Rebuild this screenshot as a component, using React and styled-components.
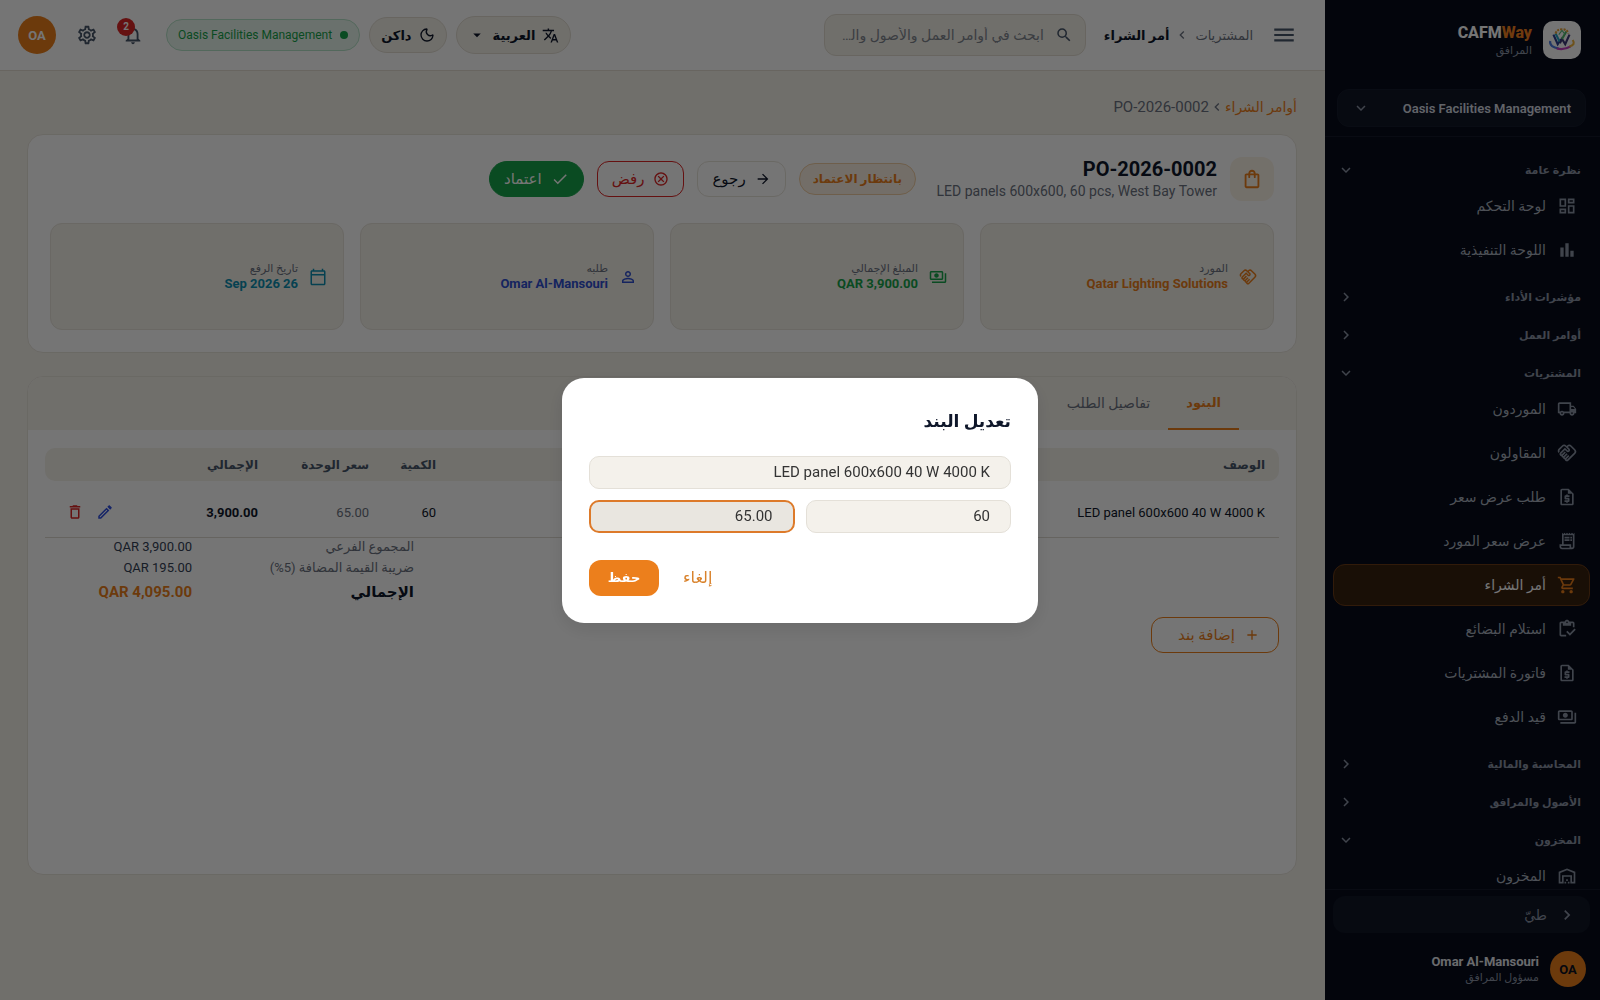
import React from 'react';
import styled, { createGlobalStyle } from 'styled-components';
import { Moon } from 'lucide-react';
import {
    MdOutlineDashboard, MdBarChart, MdOutlineLocalShipping, MdOutlineHandshake,
    MdOutlineRequestQuote, MdOutlineReceiptLong, MdOutlineShoppingCart, MdOutlineInventory,
    MdOutlinePayments, MdOutlineWarehouse, MdExpandMore, MdChevronRight, MdChevronLeft,
    MdMenu, MdSearch, MdTranslate, MdArrowDropDown, MdOutlineNotifications,
    MdOutlineSettings, MdOutlineShoppingBag, MdArrowForward, MdOutlineCancel, MdCheck,
    MdPersonOutline, MdOutlineCalendarToday, MdOutlineEdit, MdDeleteOutline, MdAdd,
} from 'react-icons/md';

const menu = [
    {
        title: 'نظرة عامة', open: true, items: [
            { label: 'لوحة التحكم', icon: MdOutlineDashboard },
            { label: 'اللوحة التنفيذية', icon: MdBarChart },
        ],
    },
    { title: 'مؤشرات الأداء', items: [] },
    { title: 'أوامر العمل', items: [] },
    {
        title: 'المشتريات', open: true, items: [
            { label: 'الموردون', icon: MdOutlineLocalShipping },
            { label: 'المقاولون', icon: MdOutlineHandshake },
            { label: 'طلب عرض سعر', icon: MdOutlineRequestQuote },
            { label: 'عرض سعر المورد', icon: MdOutlineReceiptLong },
            { label: 'أمر الشراء', icon: MdOutlineShoppingCart, active: true },
            { label: 'استلام البضائع', icon: MdOutlineInventory },
            { label: 'فاتورة المشتريات', icon: MdOutlineRequestQuote },
            { label: 'قيد الدفع', icon: MdOutlinePayments },
        ],
    },
    { title: 'المحاسبة والمالية', items: [] },
    { title: 'الأصول والمرافق', items: [] },
    {
        title: 'المخزون', open: true, items: [
            { label: 'المخزون', icon: MdOutlineWarehouse },
        ],
    },
];

const facts = [
    { label: 'المورد', value: 'Qatar Lighting Solutions', icon: MdOutlineHandshake, color: '#eb7f1b' },
    { label: 'المبلغ الإجمالي', value: 'QAR 3,900.00', icon: MdOutlinePayments, color: '#16a34a' },
    { label: 'طلبه', value: 'Omar Al-Mansouri', icon: MdPersonOutline, color: '#2f4fd0' },
    { label: 'تاريخ الرفع', value: '26 Sep 2026', icon: MdOutlineCalendarToday, color: '#0e8fb0' },
];

const LogoMark = () => (
    <svg viewBox="0 0 28 28" width="30" height="30" fill="none" aria-hidden="true">
        <path d="M6 9l4 9 3-5" stroke="#2b3f94" strokeWidth="2" />
        <path d="M8 8l4 8" stroke="#29a3c4" strokeWidth="2" />
        <path d="M12 17l2-4 3 5 4-9" stroke="#3d3a78" strokeWidth="2" />
        <path d="M14 13l4-7" stroke="#4cb56a" strokeWidth="2" />
        <path d="M8 8c1-3 3-4 6-4s5 1 6 4" stroke="#e8a33a" strokeWidth="2" strokeDasharray="2 1" />
        <path d="M11 9l3-4 3 4" stroke="#58b87a" strokeWidth="1" />
        <path d="M3 15c-1 4 3 6 8 7" stroke="#4a7be0" strokeWidth="2" />
        <path d="M9 22c5 1 10 0 13-2" stroke="#c43fc0" strokeWidth="2" />
        <path d="M21 20c4-1 5-3 3-6" stroke="#efb23c" strokeWidth="2" />
    </svg>
);

const Sidebar = () => (
    <Aside>
        <Brand>
            <LogoBox><LogoMark /></LogoBox>
            <div>
                <BrandName>CAFM<span>Way</span></BrandName>
                <Small>المرافق</Small>
            </div>
        </Brand>
        <OrgWrap>
            <OrgButton type="button">
                Oasis Facilities Management
                <MdExpandMore size={18} />
            </OrgButton>
        </OrgWrap>
        <Menu>
            {menu.map((group) => (
                <Group key={group.title} $open={group.open}>
                    <GroupButton type="button" aria-expanded={!!group.open}>
                        {group.title}
                        {group.open ? <MdExpandMore size={18} /> : <MdChevronRight size={18} />}
                    </GroupButton>
                    {group.items.map(({ label, icon: Icon, active }) => (
                        <MenuLink key={label} href="#" $active={active}>
                            <Icon size={20} />
                            {label}
                        </MenuLink>
                    ))}
                </Group>
            ))}
        </Menu>
        <SideFooter>
            <Collapse type="button"><MdChevronRight size={20} />طيّ</Collapse>
            <User>
                <Avatar $dark>OA</Avatar>
                <div>
                    <UserName>Omar Al-Mansouri</UserName>
                    <Small>مسؤول المرافق</Small>
                </div>
            </User>
        </SideFooter>
    </Aside>
);

const Header = () => (
    <TopBar>
        <IconButton type="button" aria-label="القائمة"><MdMenu size={26} /></IconButton>
        <TopCrumbs>
            <span>المشتريات</span>
            <MdChevronLeft size={16} />
            <strong>أمر الشراء</strong>
        </TopCrumbs>
        <Search>
            <MdSearch size={18} />
            <SearchInput aria-label="بحث" placeholder="ابحث في أوامر العمل والأصول والطلبات" />
        </Search>
        <Tools>
            <Pill type="button">
                <MdTranslate size={17} />
                العربية
                <MdArrowDropDown size={18} />
            </Pill>
            <Pill type="button" $small><Moon size={16} />داكن</Pill>
            <Tenant><Dot />Oasis Facilities Management</Tenant>
            <IconButton type="button" aria-label="الإشعارات">
                <MdOutlineNotifications size={22} />
                <Badge>2</Badge>
            </IconButton>
            <IconButton type="button" aria-label="الإعدادات"><MdOutlineSettings size={22} /></IconButton>
            <Avatar>OA</Avatar>
        </Tools>
    </TopBar>
);

const Summary = () => (
    <Card>
        <SummaryHead>
            <BagBox><MdOutlineShoppingBag size={22} /></BagBox>
            <OrderInfo>
                <OrderTitle>PO-2026-0002</OrderTitle>
                <OrderText>LED panels 600x600, 60 pcs, West Bay Tower</OrderText>
            </OrderInfo>
            <Status>بانتظار الاعتماد</Status>
            <Actions>
                <Button type="button"><MdArrowForward size={16} />رجوع</Button>
                <Button type="button" $tone="danger"><MdOutlineCancel size={16} />رفض</Button>
                <Button type="button" $tone="success"><MdCheck size={18} />اعتماد</Button>
            </Actions>
        </SummaryHead>
        <Facts>
            {facts.map(({ label, value, icon: Icon, color }) => (
                <Fact key={label} $color={color}>
                    <Icon size={18} />
                    <div>
                        <FactLabel>{label}</FactLabel>
                        <FactValue>{value}</FactValue>
                    </div>
                </Fact>
            ))}
        </Facts>
    </Card>
);

const Items = () => (
    <ItemsCard>
        <Tabs role="tablist">
            <Tab type="button" role="tab" aria-selected="true" $active>البنود</Tab>
            <Tab type="button" role="tab" aria-selected="false">تفاصيل الطلب</Tab>
        </Tabs>
        <ItemsBody>
            <Table>
                <colgroup>
                    <col />
                    <Col $w={67} />
                    <Col $w={111} />
                    <Col $w={138} />
                    <Col $w={89} />
                </colgroup>
                <thead>
                    <tr>
                        <Th>الوصف</Th>
                        <Th>الكمية</Th>
                        <Th>سعر الوحدة</Th>
                        <Th>الإجمالي</Th>
                        <Th />
                    </tr>
                </thead>
                <tbody>
                    <tr>
                        <Td>LED panel 600x600 40 W 4000 K</Td>
                        <Td>60</Td>
                        <Td $muted>65.00</Td>
                        <Td $strong>3,900.00</Td>
                        <Td>
                            <RowActions>
                                <RowButton type="button" aria-label="تعديل" $color="#2f4fe0"><MdOutlineEdit size={18} /></RowButton>
                                <RowButton type="button" aria-label="حذف" $color="#dc2626"><MdDeleteOutline size={18} /></RowButton>
                            </RowActions>
                        </Td>
                    </tr>
                </tbody>
            </Table>
            <Totals>
                <dt>المجموع الفرعي</dt>
                <dd>QAR 3,900.00</dd>
                <dt>ضريبة القيمة المضافة (5%)</dt>
                <dd>QAR 195.00</dd>
                <GrandLabel>الإجمالي</GrandLabel>
                <GrandValue>QAR 4,095.00</GrandValue>
            </Totals>
            <AddButton type="button"><MdAdd size={16} />إضافة بند</AddButton>
        </ItemsBody>
    </ItemsCard>
);

const EditDialog = () => (
    <Overlay>
        <Dialog role="dialog" aria-modal="true" aria-labelledby="edit-title">
            <DialogTitle id="edit-title">تعديل البند</DialogTitle>
            <Field aria-label="الوصف" defaultValue="LED panel 600x600 40 W 4000 K" />
            <FieldRow>
                <Field aria-label="الكمية" defaultValue="60" />
                <Field aria-label="سعر الوحدة" defaultValue="65.00" $focused />
            </FieldRow>
            <DialogActions>
                <CancelButton type="button">إلغاء</CancelButton>
                <SaveButton type="button">حفظ</SaveButton>
            </DialogActions>
        </Dialog>
    </Overlay>
);

const App = () => (
    <>
        <GlobalStyle />
        <Page dir="rtl">
            <Sidebar />
            <Main>
                <Header />
                <Content>
                    <Crumbs>
                        <a href="#">أوامر الشراء</a>
                        <MdChevronLeft size={16} />
                        <span>PO-2026-0002</span>
                    </Crumbs>
                    <Summary />
                    <Items />
                </Content>
            </Main>
            <EditDialog />
        </Page>
    </>
);

const GlobalStyle = createGlobalStyle`
* { box-sizing: border-box; }

body {
    margin: 0;
    overflow: hidden;
}

body, button, input {
    font-family: Roboto, "DejaVu Sans", sans-serif;
}

button {
    border: 0;
    padding: 0;
    background: none;
    color: inherit;
}

svg { flex-shrink: 0; }
`

const Page = styled.div`
display: flex;
height: 100vh;
background: #f4f1ea;
color: #0f172a;
`

const Aside = styled.aside`
display: flex;
flex-direction: column;
width: 275px;
flex-shrink: 0;
background: #070c1b;
color: #a3abb8;
`

const Brand = styled.div`
display: flex;
align-items: center;
gap: 11px;
height: 80px;
padding: 0 19px;
`

const LogoBox = styled.div`
display: flex;
align-items: center;
justify-content: center;
width: 38px;
height: 38px;
border-radius: 10px;
background: #ffffff;
`

const BrandName = styled.div`
font-size: 16px;
line-height: 20px;
font-weight: 800;
color: #ffffff;
direction: ltr;

span { color: #f58220; }
`

const Small = styled.div`
font-size: 11px;
line-height: 15px;
color: #8c95a6;
`

const OrgWrap = styled.div`
padding: 9px 14px 9px 12px;
border-bottom: 1px solid #141a2a;
`

const OrgButton = styled.button`
display: flex;
align-items: center;
justify-content: space-between;
width: 100%;
height: 38px;
padding: 0 14px;
border: 1px solid #151b2c;
border-radius: 12px;
background: #101626;
font-size: 13px;
font-weight: 600;
color: #d5dae3;

svg { color: #8c95a6; }
`

const Menu = styled.nav`
flex: 1;
min-height: 0;
overflow: hidden;
padding: 9px 10px 0 8px;
`

const Group = styled.div`
display: flex;
flex-direction: column;
padding-bottom: ${({ $open }) => ($open ? '1px' : '0')};
`

const GroupButton = styled.button`
display: flex;
align-items: center;
justify-content: space-between;
width: 100%;
height: 28px;
margin-top: 10px;
padding: 0 9px 0 4px;
font-size: 11px;
font-weight: 600;
color: #8c95a6;
`

const MenuLink = styled.a`
display: flex;
align-items: center;
gap: 11px;
height: 42px;
margin: 1px 0;
padding: 0 12px;
border: 1px solid ${({ $active }) => ($active ? '#6b3c17' : 'transparent')};
border-radius: 12px;
background: ${({ $active }) => ($active ? '#38210f' : 'transparent')};
font-size: 14px;
font-weight: 500;
color: ${({ $active }) => ($active ? '#ffffff' : '#a9b1be')};
text-decoration: none;

svg { color: ${({ $active }) => ($active ? '#eb7f1b' : '#8c95a6')}; }
`

const SideFooter = styled.div`
display: flex;
flex-direction: column;
gap: 18px;
padding: 6px 10px 13px 8px;
border-top: 1px solid #141a2a;
`

const Collapse = styled.button`
display: flex;
align-items: center;
gap: 10px;
height: 37px;
padding: 0 13px;
border-radius: 12px;
background: #101626;
font-size: 14px;
color: #8c95a6;
`

const User = styled.div`
display: flex;
align-items: center;
gap: 11px;
padding: 0 4px;
`

const UserName = styled.div`
font-size: 13px;
line-height: 17px;
font-weight: 700;
color: #e6e9ef;
`

const Avatar = styled.div`
display: flex;
align-items: center;
justify-content: center;
width: ${({ $dark }) => ($dark ? '36px' : '38px')};
height: ${({ $dark }) => ($dark ? '36px' : '38px')};
border-radius: 50%;
background: #eb7f1b;
font-size: 13px;
font-weight: 700;
color: ${({ $dark }) => ($dark ? '#0b1120' : '#ffffff')};
`

const Main = styled.div`
flex: 1;
min-width: 0;
`

const TopBar = styled.header`
display: flex;
align-items: center;
height: 71px;
padding: 0 28px 0 18px;
border-bottom: 1px solid #e2ddd2;
background: #ffffff;
`

const IconButton = styled.button`
position: relative;
display: flex;
align-items: center;
justify-content: center;
width: 26px;
height: 26px;
color: #475569;
`

const TopCrumbs = styled.div`
display: flex;
align-items: center;
gap: 5px;
margin: 0 18px;
font-size: 13px;
color: #6b7280;

strong { color: #0f172a; }
`

const Search = styled.div`
display: flex;
align-items: center;
gap: 11px;
width: 262px;
height: 42px;
padding: 0 12px;
border: 1px solid #e2ddd2;
border-radius: 12px;
background: #f4f1ea;
color: #475569;
`

const SearchInput = styled.input`
flex: 1;
min-width: 0;
border: 0;
padding: 0;
outline: 0;
background: none;
font-size: 14px;
text-overflow: ellipsis;

&::placeholder { color: #80868f; opacity: 1; }
`

const Tools = styled.div`
display: flex;
align-items: center;
gap: 9px;
margin-right: auto;

${IconButton} { margin-right: 11px; }
${Avatar} { margin-right: 9px; }
`

const Pill = styled.button`
display: flex;
align-items: center;
gap: 7px;
height: ${({ $small }) => ($small ? '36px' : '38px')};
padding: 0 11px;
border: 1px solid #e2ddd2;
border-radius: 19px;
background: #f4f1ea;
font-size: 13px;
font-weight: 600;
`

const Tenant = styled.div`
display: flex;
align-items: center;
gap: 8px;
height: 32px;
padding: 0 11px;
border: 1px solid #b5e2c8;
border-radius: 16px;
background: #e8f6ee;
font-size: 12px;
color: #16a34a;
`

const Dot = styled.span`
width: 8px;
height: 8px;
border-radius: 50%;
background: #16a34a;
`

const Badge = styled.span`
position: absolute;
top: -4px;
left: -3px;
width: 18px;
height: 18px;
border-radius: 50%;
background: #dc2626;
font-size: 10px;
line-height: 18px;
font-weight: 700;
text-align: center;
color: #ffffff;
`

const Content = styled.main`
padding: 24px 28px 24px 27px;
`

const Crumbs = styled.div`
display: flex;
align-items: center;
height: 24px;
margin-bottom: 15px;
font-size: 15px;
color: #6b7280;

a {
    font-size: 14px;
    color: #eb7f1b;
    text-decoration: none;
}
`

const Card = styled.section`
border: 1px solid #e8e4db;
border-radius: 16px;
background: #ffffff;
padding: 22px;
`

const SummaryHead = styled.div`
display: flex;
align-items: center;
gap: 13px;
`

const BagBox = styled.div`
display: flex;
align-items: center;
justify-content: center;
width: 44px;
height: 44px;
border-radius: 12px;
background: #fbf3e8;
color: #eb7f1b;
`

const OrderInfo = styled.div`
min-width: 288px;
`

const OrderTitle = styled.h1`
margin: 0;
font-size: 20px;
line-height: 24px;
font-weight: 700;
`

const OrderText = styled.div`
font-size: 14px;
line-height: 20px;
color: #6b7280;
`

const Status = styled.span`
display: flex;
align-items: center;
height: 32px;
padding: 0 13px;
border: 1px solid #f0cda3;
border-radius: 16px;
background: #fbf0e2;
font-size: 12px;
font-weight: 700;
color: #eb7f1b;
`

const Actions = styled.div`
display: flex;
gap: 13px;
`

const tones = {
    plain: { bg: '#ffffff', border: '#e8e4db', text: '#0f172a' },
    danger: { bg: '#ffffff', border: '#dc2626', text: '#dc2626' },
    success: { bg: '#16a34a', border: '#16a34a', text: '#ffffff' },
};

const Button = styled.button`
display: flex;
align-items: center;
gap: 9px;
height: 36px;
padding: 0 14px;
border: 1px solid ${({ $tone = 'plain' }) => tones[$tone].border};
border-radius: ${({ $tone }) => ($tone === 'success' ? '18px' : '12px')};
background: ${({ $tone = 'plain' }) => tones[$tone].bg};
font-size: 15px;
color: ${({ $tone = 'plain' }) => tones[$tone].text};
`

const Facts = styled.div`
display: grid;
grid-template-columns: repeat(4, 1fr);
gap: 16px;
margin-top: 22px;
`

const Fact = styled.div`
display: flex;
align-items: center;
gap: 11px;
height: 107px;
padding: 0 16px;
border: 1px solid #e6e2d9;
border-radius: 12px;
background: #f4f1ea;
color: ${({ $color }) => $color};
`

const FactLabel = styled.div`
font-size: 11px;
line-height: 15px;
color: #6b7280;
`

const FactValue = styled.div`
font-size: 13px;
line-height: 16px;
font-weight: 700;
`

const ItemsCard = styled.section`
display: flex;
flex-direction: column;
min-height: 499px;
margin-top: 23px;
border: 1px solid #e8e4db;
border-radius: 16px;
background: #ffffff;
overflow: hidden;
`

const Tabs = styled.div`
display: flex;
height: 53px;
padding: 0 57px;
background: #f4f1ea;
`

const Tab = styled.button`
padding: 0 18px;
border-bottom: 2px solid ${({ $active }) => ($active ? '#eb7f1b' : 'transparent')};
font-size: ${({ $active }) => ($active ? '13px' : '14px')};
font-weight: ${({ $active }) => ($active ? 700 : 400)};
color: ${({ $active }) => ($active ? '#eb7f1b' : '#6b7280')};
`

const ItemsBody = styled.div`
padding: 18px 17px;
`

const Table = styled.table`
width: 100%;
table-layout: fixed;
border-collapse: separate;
border-spacing: 0;
`

const Col = styled.col`
width: ${({ $w }) => $w}px;
`

const Th = styled.th`
height: 33px;
padding: 0 14px;
background: #f4f1ea;
font-size: 12px;
font-weight: 700;
text-align: right;
white-space: nowrap;
color: #475569;

&:first-child { border-radius: 0 10px 10px 0; }
&:last-child { border-radius: 10px 0 0 10px; }
`

const Td = styled.td`
height: 57px;
padding: 6px 14px 0;
border-bottom: 1px solid #dedad1;
font-size: 13px;
font-weight: ${({ $strong }) => ($strong ? 700 : 400)};
color: ${({ $muted }) => ($muted ? '#6b7280' : '#0f172a')};
`

const RowActions = styled.div`
display: flex;
`

const RowButton = styled.button`
display: flex;
align-items: center;
justify-content: center;
width: 30px;
height: 30px;
color: ${({ $color }) => $color};
`

const Totals = styled.dl`
display: grid;
grid-template-columns: 1fr 96px;
row-gap: 3px;
width: 318px;
margin: 0 auto 0 51px;
font-size: 13px;
line-height: 18px;
color: #334155;

dt { color: #6b7280; }
dd { margin: 0; }
`

const GrandLabel = styled.dt`
&& {
    line-height: 24px;
    font-size: 15px;
    font-weight: 700;
    color: #0f172a;
}
`

const GrandValue = styled.dd`
&& {
    line-height: 24px;
    font-size: 15px;
    font-weight: 700;
    color: #eb7f1b;
}
`

const AddButton = styled.button`
display: flex;
align-items: center;
gap: 9px;
height: 36px;
margin-top: 13px;
padding: 0 18px 0 26px;
border: 1px solid #eb7f1b;
border-radius: 12px;
font-size: 15px;
color: #eb7f1b;
`

const Overlay = styled.div`
position: fixed;
inset: 0;
display: flex;
align-items: center;
justify-content: center;
background: rgba(0, 0, 0, 0.54);
`

const Dialog = styled.div`
display: flex;
flex-direction: column;
gap: 11px;
width: 476px;
padding: 27px;
border-radius: 22px;
background: #ffffff;
box-shadow: 0 6px 20px rgba(0, 0, 0, 0.1);
`

const DialogTitle = styled.h2`
margin: 0 0 7px;
font-size: 17px;
line-height: 33px;
font-weight: 700;
`

const FieldRow = styled.div`
display: grid;
grid-template-columns: 1fr 1fr;
gap: 11px;
`

const Field = styled.input`
width: 100%;
height: 33px;
padding: 0 20px;
border: ${({ $focused }) => ($focused ? '2px solid #dd7a2a' : '1px solid #e4e0d8')};
border-radius: 10px;
outline: 0;
background: ${({ $focused }) => ($focused ? '#e9e6e0' : '#f4f1eb')};
font-size: 15px;
color: #333333;
`

const DialogActions = styled.div`
display: flex;
justify-content: flex-end;
gap: 24px;
margin-top: 16px;
`

const CancelButton = styled.button`
font-size: 16px;
color: #d9822b;
`

const SaveButton = styled.button`
width: 70px;
height: 36px;
border-radius: 12px;
background: #ec7f1c;
font-size: 13px;
font-weight: 700;
color: #ffffff;
`

export default App;
